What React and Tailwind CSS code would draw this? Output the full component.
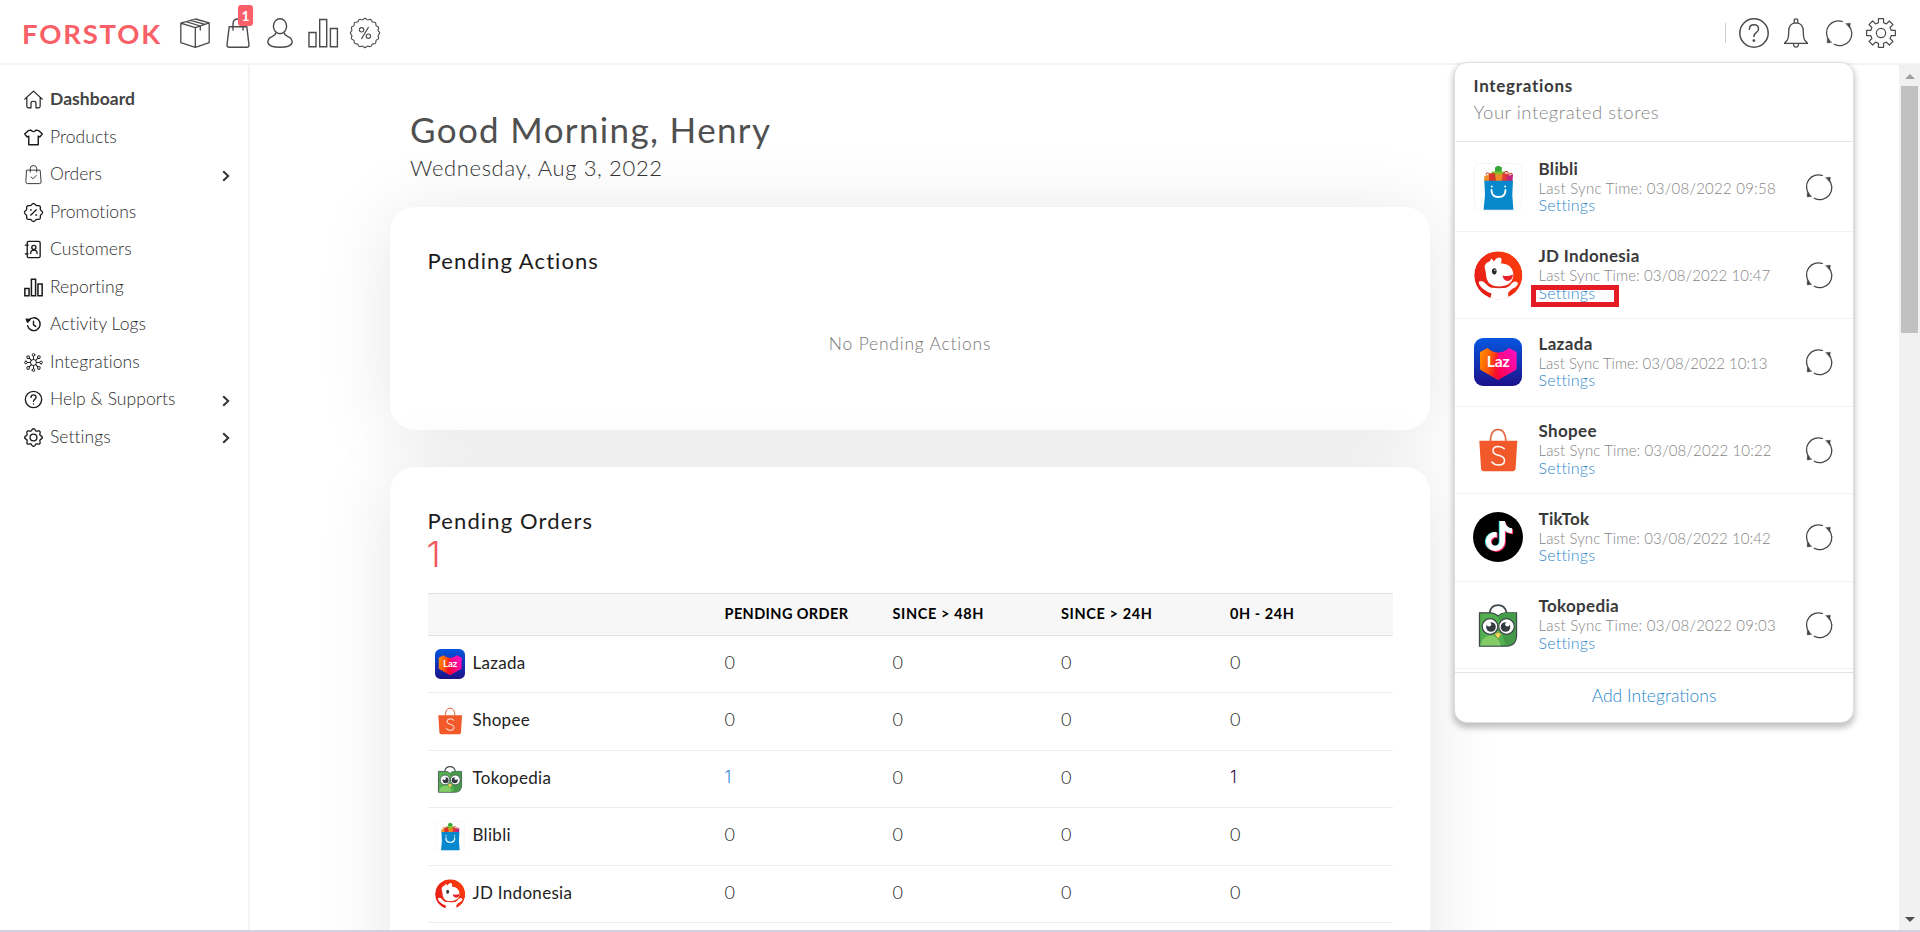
import React from "react";
import { FaTiktok } from "react-icons/fa";

/* ---------- shape helpers ---------- */

function wavePath(c, r, amp, lobes) {
  const pts = [];
  const n = 144;
  for (let i = 0; i < n; i++) {
    const a = (i / n) * Math.PI * 2 - Math.PI / 2;
    const rr = r + amp * Math.cos(lobes * (a + Math.PI / 2));
    pts.push(`${(c + rr * Math.cos(a)).toFixed(2)} ${(c + rr * Math.sin(a)).toFixed(2)}`);
  }
  return `M${pts.join("L")}Z`;
}

function gearPath(c, inner, outer, teeth, half) {
  const pts = [];
  const step = (Math.PI * 2) / teeth;
  for (let i = 0; i < teeth; i++) {
    const a = i * step - Math.PI / 2;
    const w = half / inner;
    const v = half / outer;
    [
      [inner, a - w],
      [outer, a - v],
      [outer, a + v],
      [inner, a + w],
    ].forEach(([r, t]) => pts.push(`${(c + r * Math.cos(t)).toFixed(2)} ${(c + r * Math.sin(t)).toFixed(2)}`));
  }
  return `M${pts.join("L")}Z`;
}

function Svg({ size = 19, box = 20, sw = 1.2, className = "", children }) {
  return (
    <svg
      width={size}
      height={size}
      viewBox={`0 0 ${box} ${box}`}
      fill="none"
      stroke="currentColor"
      strokeWidth={sw}
      strokeLinecap="round"
      strokeLinejoin="round"
      className={`shrink-0 overflow-visible ${className}`}
    >
      {children}
    </svg>
  );
}

/* ---------- top bar icons (30px grid) ---------- */

const BoxIcon = () => (
  <Svg size={30} box={30} sw={1.3}>
    <path d="M15.5 1 29.2 4.8V24.7L15.3 29.3 0.8 24.7V5.2ZM0.8 5.2 15.3 9.6 29.2 4.8M15.3 9.6V29.3M6 3.7 20.3 8V12M10.5 2.4 25 6.3" />
  </Svg>
);

const BagIcon = () => (
  <svg width="24" height="30" viewBox="0 0 24 30" fill="none" stroke="currentColor" strokeWidth="1.4" strokeLinejoin="round" strokeLinecap="round" className="shrink-0">
    <path d="M3.2 8.7H20.8L23 27Q23 29.2 20.8 29.2H3.2Q1 29.2 1 27Z" />
    <path d="M7 12V6.2Q7 1 12 1T17 6.2V12" />
  </svg>
);

const UserIcon = () => (
  <svg width="26" height="30" viewBox="0 0 26 30" fill="none" stroke="currentColor" strokeWidth="1.4" className="shrink-0">
    <ellipse cx="13" cy="8.2" rx="6.6" ry="7.5" />
    <path d="M8.8 14.5Q8.6 17 5 18.6Q0.8 20.3 0.8 24.5Q2 29.3 13 29.3T25.2 24.5Q25.2 20.3 21 18.6Q17.4 17 17.2 14.5" />
  </svg>
);

const BarsIcon = () => (
  <Svg size={30} box={30} sw={1.4}>
    <path d="M1 14.5H8V28.7H1ZM11.7 1.5H18.7V28.7H11.7ZM22.4 10.5H29.4V28.7H22.4Z" strokeLinejoin="miter" />
  </Svg>
);

const PercentIcon = () => (
  <Svg size={30} box={30} sw={1.1}>
    <path d={wavePath(15, 14, 0.65, 16)} />
    <circle cx="11.6" cy="11.8" r="2.2" />
    <circle cx="18.4" cy="18.2" r="2.2" />
    <path d="M18.4 9.4 11.6 20.6" />
  </Svg>
);

const HelpIcon = () => (
  <Svg size={30} box={30} sw={1.5}>
    <circle cx="15" cy="15" r="14.2" />
    <path d="M10.4 11.2Q10.4 6.7 15 6.7T19.5 11Q19.5 13.2 17.2 14.6T14.9 18.6" />
    <circle cx="14.9" cy="22.6" r="0.7" fill="currentColor" />
  </Svg>
);

const BellIcon = () => (
  <svg width="24" height="30" viewBox="0 0 24 30" fill="none" stroke="currentColor" strokeWidth="1.3" strokeLinejoin="round" className="shrink-0">
    <path d="M10.2 5V2.4Q10.2 0.8 12 0.8T13.8 2.4V5" />
    <path d="M12 4.8Q19.3 5 19.3 13.5Q19.3 20 20.8 22.2L23.6 25.4H0.4L3.2 22.2Q4.7 20 4.7 13.5Q4.7 5 12 4.8Z" />
    <path d="M9.5 25.6Q9.5 29.2 12 29.2T14.5 25.6" />
  </svg>
);

const SyncIcon = () => (
  <Svg size={26} box={26} sw={1.3}>
    <path d="M3.2 20.4A12 12 0 0 1 16.4 1.5M22.4 5.2A12 12 0 0 1 8.200 24.200" />
    <path d="M19.800 3.600 24.400 3.200 23.800 7.800ZM1.200 18.600 1.200 23 5.600 22.400Z" fill="currentColor" strokeWidth="0.400" />
  </Svg>
);

const GearIcon = () => (
  <Svg size={30} box={30} sw={1.2}>
    <path d={gearPath(15, 10.6, 14.6, 8, 2.6)} />
    <circle cx="15" cy="15" r="4.6" />
  </Svg>
);

/* ---------- sidebar icons (19px grid) ---------- */

const icons = {
  home: (
    <Svg>
      <path d="M0.8 9.6 10 1.2 19.2 9.6M3 8V17.2Q3 18.8 4.6 18.8H7.4V13.6Q7.4 11.8 10 11.8T12.6 13.6V18.8H15.4Q17 18.8 17 17.2V8" />
    </Svg>
  ),
  shirt: (
    <Svg sw={1.5}>
      <path d="M7 2.2Q10 5.4 13 2.2L15.6 2.8 19.3 6.4 16.6 9.4 15 8.6V17.6H5V8.6L3.4 9.4 0.7 6.4 4.4 2.8Z" />
    </Svg>
  ),
  bag: (
    <Svg sw={0.9}>
      <path d="M3 5.4H17L18 18Q18 19.6 16.4 19.6H3.6Q2 19.6 2 18ZM6.6 7.4V3.6Q6.6 0.6 10 0.6T13.4 3.6V7.4M7.4 12.6 9.4 14.4 13 11" />
    </Svg>
  ),
  percent: (
    <Svg sw={1.4}>
      <path d={wavePath(10, 8.7, 0.75, 8)} />
      <path d="M13 7.2 7 12.8" />
      <circle cx="7.2" cy="7.4" r="0.3" />
      <circle cx="12.9" cy="12.7" r="0.3" />
    </Svg>
  ),
  contact: (
    <Svg sw={1.4}>
      <rect x="3.4" y="1.4" width="13.6" height="17.2" rx="1.5" />
      <path d="M1.4 5.4H4.4M1.4 14.6H4.4M7 14.2Q7 10.6 10.4 10.6T13.8 14.2" />
      <circle cx="10.4" cy="7.8" r="2.2" />
    </Svg>
  ),
  bars: (
    <Svg sw={1.6}>
      <path d="M0.9 11H5.3V18.6H0.9ZM7.8 1.4H12.2V18.6H7.8ZM14.7 6.4H19.1V18.6H14.7Z" strokeLinejoin="miter" />
    </Svg>
  ),
  history: (
    <Svg sw={1.5}>
      <path d="M4.600 6.200A6.700 6.700 0 1 1 3.800 11.200M10 6.600V10.400L12.400 12" />
      <path d="M2.400 4.400 6.400 4.800 3.800 7.600Z" fill="currentColor" />
    </Svg>
  ),
  network: (
    <Svg sw={1}>
      <circle cx="10" cy="10" r="3.2" />
      {[0, 45, 90, 135, 180, 225, 270, 315].map((d) => (
        <g key={d} transform={`rotate(${d} 10 10)`}>
          <path d="M10 6.8V3.6" />
          <circle cx="10" cy="2" r="1.4" />
        </g>
      ))}
    </Svg>
  ),
  help: (
    <Svg sw={1.4}>
      <circle cx="10" cy="10" r="8.6" />
      <path d="M7.4 7.8Q7.4 5.2 10 5.2T12.7 7.6Q12.7 9 11.3 9.8T10 12M10 14.6V14.8" />
    </Svg>
  ),
  gear: (
    <Svg sw={1.4}>
      <path d={wavePath(10, 8.3, 1, 8)} />
      <circle cx="10" cy="10" r="3.6" />
    </Svg>
  ),
};

/* ---------- store logos (48px grid) ---------- */

function Lazada({ size, id }) {
  return (
    <svg width={size} height={size} viewBox="0 0 48 48" className="shrink-0">
      <defs>
        <linearGradient id={`${id}-bg`} x1="0" y1="0" x2="0" y2="1">
          <stop offset="0" stopColor="#0656e0" />
          <stop offset="1" stopColor="#1c128a" />
        </linearGradient>
        <linearGradient id={`${id}-l`} x1="0" y1="0" x2="1" y2="0.4">
          <stop offset="0" stopColor="#ff9100" />
          <stop offset="0.6" stopColor="#ff5a08" />
          <stop offset="1" stopColor="#f8102c" />
        </linearGradient>
        <linearGradient id={`${id}-r`} x1="0" y1="1" x2="1" y2="0">
          <stop offset="0" stopColor="#ff0038" />
          <stop offset="0.6" stopColor="#ff0a9c" />
          <stop offset="1" stopColor="#ff10c8" />
        </linearGradient>
      </defs>
      <rect width="48" height="48" rx="9" fill={`url(#${id}-bg)`} />
      <path d="M6 14 13.5 10Q18.500 14.500 24 14.500V42L6.800 32Q6 31.500 6 30.500Z" fill={`url(#${id}-l)`} />
      <path d="M42.600 14 35 10Q29.500 14.500 24 14.500V42L41.800 32Q42.600 31.500 42.600 30.500Z" fill={`url(#${id}-r)`} />
      <text x="24.200" y="29.200" textAnchor="middle" fill="#fff" className="font-['Lato',sans-serif] text-[15.500px] font-bold">
        Laz
      </text>
    </svg>
  );
}

function Shopee({ size }) {
  return (
    <svg width={size} height={size} viewBox="0 0 48 48" className="shrink-0">
      <path d="M16.500 15.500Q16.500 3.500 24 3.500T31.800 15.500" fill="none" stroke="#e8623c" strokeWidth="1.600" />
      <path d="M5.300 14.700H43.300L41.600 42.500Q41.300 45.300 38.500 45.300H10Q7.200 45.300 7 42.500Z" fill="#f1592a" />
      <path
        d="M30.300 22.800Q28 20.500 24.400 20.500Q19 20.500 19 24.700Q19 28 24.500 29.300Q30.500 30.700 30.500 34.500Q30.500 39 24.500 39Q20.500 39 17.800 36"
        fill="none"
        stroke="#fff"
        strokeWidth="1.500"
        strokeLinecap="round"
      />
    </svg>
  );
}

function Tokopedia({ size }) {
  return (
    <svg width={size} height={size} viewBox="0 0 48 48" className="shrink-0">
      <path d="M15.500 12Q17 4.200 24 4.200T32.700 12" fill="none" stroke="#3e474c" strokeWidth="1.700" />
      <path d="M5.500 11.800H17Q21 12 24 15Q27 12 31 11.800H42.500V34Q42.500 45.200 31.500 45.200H5.500Z" fill="#53b04f" stroke="#3e474c" strokeWidth="1.300" />
      <path d="M24 15Q27 12 31 11.800H42V34Q42 44.600 31.500 44.600Z" fill="#449a48" />
      <path d="M6.200 44.500Q8 35 17.500 34.500Q24 34.800 27 44.500Z" fill="#84cc66" />
      <circle cx="16" cy="25.500" r="7.800" fill="#fff" stroke="#3e474c" strokeWidth="1.200" />
      <circle cx="32.500" cy="25.500" r="7.800" fill="#fff" stroke="#3e474c" strokeWidth="1.200" />
      <circle cx="17" cy="26" r="4.800" fill="#333b40" />
      <circle cx="31.500" cy="26" r="4.800" fill="#333b40" />
      <circle cx="15" cy="23.200" r="2.300" fill="#fff" />
      <circle cx="33.500" cy="23.200" r="2.300" fill="#fff" />
      <path d="M20.800 33Q24 30 27.300 33L24 38Z" fill="#f8d75c" stroke="#8d7a3c" strokeWidth="0.500" />
    </svg>
  );
}

function Blibli({ size }) {
  return (
    <svg width={size} height={size} viewBox="0 0 48 48" className="shrink-0">
      <rect x="0.500" y="0.500" width="47" height="47" rx="5" fill="#fff" stroke="#f4f4f4" />
      <path d="M21 4.500 24 2.600 28 4.500 27.500 9H21Z" fill="#35a535" />
      <path d="M17.500 8.500H31V17.700H17.500Z" fill="#86bc2b" />
      <path d="M10.500 13 15 11.500 19 18H10Z" fill="#f0902a" />
      <path d="M15 10.500 21 10 22 18H15Z" fill="#d9362b" />
      <path d="M22 11.500H29V18H22Z" fill="#f08a24" />
      <path d="M28.500 10 35 11V18H28Z" fill="#e03a3a" />
      <path d="M33 13 39 11.500 38.500 18H33Z" fill="#c0267c" />
      <path d="M12 11.500Q13.500 8 15.500 11.500M30 10Q33 6.500 34.500 10.500M35 11.500Q37 9 38.500 12" fill="none" stroke="#cf4436" strokeWidth="1.100" />
      <path d="M10.300 17.700H39L38.300 32 39.400 46.700H9.600L11 32Z" fill="#0888cc" />
      <path d="M17.500 27Q17.500 34 24.500 34T31.500 27" fill="none" stroke="#fff" strokeWidth="1.900" strokeLinecap="round" />
      <circle cx="17.800" cy="23.500" r="1" fill="#fff" />
      <circle cx="31.200" cy="23.500" r="1" fill="#fff" />
    </svg>
  );
}

function JdIndonesia({ size, id }) {
  return (
    <svg width={size} height={size} viewBox="0 0 48 48" className="shrink-0 overflow-visible">
      <defs>
        <linearGradient id={`${id}-jd`} x1="0" y1="1" x2="1" y2="0.300">
          <stop offset="0" stopColor="#e2161b" />
          <stop offset="1" stopColor="#fb3c0c" />
        </linearGradient>
        <clipPath id={`${id}-clip`}>
          <circle cx="24.300" cy="24.300" r="24.100" />
        </clipPath>
      </defs>
      <g clipPath={`url(#${id}-clip)`}>
        <circle cx="24.300" cy="24.300" r="24.100" fill={`url(#${id}-jd)`} />
        <path d="M5 30.500Q9 29 12 33Q16 37.500 19 36.500L30 37Q35 36.500 37.500 32.500Q41 29 43.500 31.500Q45 33 41 36.500Q35.500 39 34 42.500L35 49H16L17.500 42.500Q8 39 5 33Z" fill="#fff" />
        <path d="M10.500 15.500Q11.500 11.500 15.500 10.500L17.500 7.500 20 10.500Q21.500 7 25 6.500Q28 6.500 27.500 9.500L27 12.500Q32 12 35.500 15Q39.500 18.500 39.300 24.500Q38.500 34.500 26 35.500Q14.500 36 12.500 27Q12 21 10.500 15.500Z" fill="#fff" />
        <ellipse cx="20.300" cy="20.300" rx="2.300" ry="3.100" fill="#2c2424" />
        <circle cx="20.900" cy="19.300" r="0.700" fill="#fff" />
        <path d="M28.500 24.500Q34 26 39 23.500Q38.500 30 33.500 30Q29.500 29.500 28.500 24.500Z" fill="#e8202a" />
        <path d="M18 35Q25 37 33 34.500L33.500 36Q25 38.300 18.500 36.500Z" fill="#d82a22" />
      </g>
    </svg>
  );
}

function TikTok({ size }) {
  return (
    <span className="relative -mx-px flex size-[50px] shrink-0 items-center justify-center rounded-full bg-black">
      <FaTiktok size={size} className="absolute top-[8.500px] left-[9.500px] text-[#35e4e0]" />
      <FaTiktok size={size} className="absolute top-[10px] left-[11.500px] text-[#f9275a]" />
      <FaTiktok size={size} className="absolute top-[9.200px] left-[10.500px] text-white" />
    </span>
  );
}

/* ---------- data ---------- */

const menu = [
  { icon: "home", label: "Dashboard", active: true },
  { icon: "shirt", label: "Products" },
  { icon: "bag", label: "Orders", more: true },
  { icon: "percent", label: "Promotions" },
  { icon: "contact", label: "Customers" },
  { icon: "bars", label: "Reporting" },
  { icon: "history", label: "Activity Logs" },
  { icon: "network", label: "Integrations" },
  { icon: "help", label: "Help & Supports", more: true },
  { icon: "gear", label: "Settings", more: true },
];

const orders = [
  { name: "Lazada", logo: <Lazada size={30} id="row-laz" />, values: ["0", "0", "0", "0"] },
  { name: "Shopee", logo: <Shopee size={30} />, values: ["0", "0", "0", "0"] },
  { name: "Tokopedia", logo: <Tokopedia size={30} />, values: ["1", "0", "0", "1"] },
  { name: "Blibli", logo: <Blibli size={30} />, values: ["0", "0", "0", "0"] },
  { name: "JD Indonesia", logo: <JdIndonesia size={30} id="row" />, values: ["0", "0", "0", "0"] },
];

const stores = [
  { name: "Blibli", time: "03/08/2022 09:58", fit: "tracking-[0.260px]", logo: <Blibli size={48} /> },
  { name: "JD Indonesia", time: "03/08/2022 10:47", fit: "tracking-[0.080px]", logo: <JdIndonesia size={48} id="pop" />, marked: true },
  { name: "Lazada", time: "03/08/2022 10:13", fit: "tracking-[-0.010px]", logo: <Lazada size={48} id="pop-laz" /> },
  { name: "Shopee", time: "03/08/2022 10:22", fit: "tracking-[0.120px]", logo: <Shopee size={48} /> },
  { name: "TikTok", time: "03/08/2022 10:42", fit: "tracking-[0.100px]", logo: <TikTok size={30} /> },
  { name: "Tokopedia", time: "03/08/2022 09:03", fit: "tracking-[0.260px]", logo: <Tokopedia size={48} /> },
];

/* ---------- sections ---------- */

function Header() {
  return (
    <header className="flex h-[65px] shrink-0 items-start justify-between border-b-2 border-[#f3f3f3] pr-6 pl-[22px] text-[#4a4a4a]">
      <div className="flex items-start pt-[18px]">
        <span className="w-[158px] text-[27.500px] leading-[32px] font-bold tracking-[1.800px] text-[#f95f66]">FORSTOK</span>
        <BoxIcon />
        <span className="relative ml-4">
          <BagIcon />
          <span className="absolute -top-[13px] left-[12px] flex h-[21px] w-[15px] items-center justify-center rounded-[3px] bg-[#fb6068] text-[14px] font-bold text-white">
            1
          </span>
        </span>
        <span className="ml-[17px]">
          <UserIcon />
        </span>
        <span className="ml-[15px]">
          <BarsIcon />
        </span>
        <span className="ml-[12px]">
          <PercentIcon />
        </span>
      </div>
      <div className="flex items-center pt-[18px]">
        <span className="h-5 w-px bg-[#cfcfcf]" />
        <span className="ml-[13px]">
          <HelpIcon />
        </span>
        <span className="ml-[15px]">
          <BellIcon />
        </span>
        <span className="ml-[18px]">
          <SyncIcon />
        </span>
        <span className="ml-[14px]">
          <GearIcon />
        </span>
      </div>
    </header>
  );
}

function Sidebar() {
  return (
    <nav className="w-[250px] shrink-0 border-r-2 border-[#f5f5f5] pt-[15.500px] pr-[18px] pl-6">
      {menu.map((m) => (
        <a key={m.label} className="flex h-[37.500px] items-center text-[17.500px] text-[#2e2e2e]">
          <span className="mt-px text-[#1a1a1a]">{icons[m.icon]}</span>
          <span className={m.active ? "ml-[7px] font-bold tracking-[0.050px] text-[#444]" : "ml-[7px] font-light tracking-[0.050px]"}>{m.label}</span>
          {m.more && (
            <svg width="8" height="12" viewBox="0 0 8 12" fill="none" stroke="#333" strokeWidth="2" className="mt-[3px] ml-auto">
              <path d="M1.200 1.200 6.200 6 1.200 10.800" />
            </svg>
          )}
        </a>
      ))}
    </nav>
  );
}

const cols = "grid grid-cols-[297px_168px_168.500px_169px_1fr]";

function OrderValue({ value, first }) {
  if (value === "0") return <span className="pb-[3px] text-[18px] font-light">0</span>;
  return (
    <span className={first ? "pb-[3px] font-['Inter',sans-serif] text-[17px] font-light text-[#3c8fe0]" : "pb-[3px] font-['Inter',sans-serif] text-[17px] font-light text-[#3a1048]"}>
      {value}
    </span>
  );
}

function Dashboard() {
  return (
    <main className="min-w-0 flex-1 overflow-hidden pt-11 pl-[140px]">
      <h1 className="pl-[20px] text-[35px] leading-[40px] tracking-[1.350px] text-[#505050]">Good Morning, Henry</h1>
      <p className="mt-[4.500px] pl-[20px] text-[22px] leading-[28px] font-light tracking-[0.640px] text-[#333]">Wednesday, Aug 3, 2022</p>

      <section className="mt-[25.500px] h-[222.500px] w-[1040px] rounded-[25px] bg-white px-[37.500px] pt-[39.500px] shadow-[0_6px_76px_rgba(0,0,0,0.100)]">
        <h2 className="text-[22px] leading-[28px] tracking-[1.080px] text-[#1c1c1c]">Pending Actions</h2>
        <p className="mt-[57.500px] text-center text-[17.500px] leading-6 font-light tracking-[0.780px] text-[#777]">No Pending Actions</p>
      </section>

      <section className="mt-[37.500px] h-[620px] w-[1040px] rounded-[25px] bg-white px-[37.500px] pt-[39.500px] shadow-[0_6px_76px_rgba(0,0,0,0.100)]">
        <h2 className="text-[22px] leading-[28px] tracking-[1.130px] text-[#1c1c1c]">Pending Orders</h2>
        <p className="mt-[1.500px] -ml-px font-['Inter',sans-serif] text-[36px] leading-[36px] font-light text-[#f4555d]">1</p>
        <div className="mt-[21px]">
          <div className={`${cols} h-[42.500px] items-center border-y border-[#e2e2e2] bg-[#f7f7f7] text-[14.500px] font-bold text-black`}>
            <span />
            <span className="tracking-[0.400px]">PENDING ORDER</span>
            <span className="tracking-[0.620px]">SINCE &gt; 48H</span>
            <span className="tracking-[0.620px]">SINCE &gt; 24H</span>
            <span className="tracking-[0.560px]">0H - 24H</span>
          </div>
          {orders.map((o) => (
            <div key={o.name} className={`${cols} h-[57.500px] items-center border-b border-[#ececec] text-[17px] text-[#222]`}>
              <span className="flex items-center pl-[7px]">
                {o.logo}
                <span className="ml-2 pb-[3px] tracking-[0.300px]">{o.name}</span>
              </span>
              {o.values.map((v, i) => (
                <OrderValue key={i} value={v} first={i === 0} />
              ))}
            </div>
          ))}
        </div>
      </section>
    </main>
  );
}

function Scrollbar() {
  return (
    <div className="flex w-[21px] shrink-0 flex-col items-center bg-[#f1f1f1]">
      <svg width="10" height="5" viewBox="0 0 10 5" className="mt-[9px] shrink-0">
        <path d="M0 5 5 0 10 5Z" fill="#a0a0a0" />
      </svg>
      <div className="mt-[7px] h-[247px] w-[17px] bg-[#c1c1c1]" />
      <svg width="10" height="5" viewBox="0 0 10 5" className="mt-auto mb-[8px] shrink-0">
        <path d="M0 0 5 5 10 0Z" fill="#505050" />
      </svg>
    </div>
  );
}

function IntegrationsMenu() {
  return (
    <aside className="absolute top-[62px] left-[1454px] flex h-[661px] w-[400px] flex-col rounded-[13px] border border-[#dedede] bg-white shadow-[0_4px_6px_1px_rgba(0,0,0,0.240)]">
      <div className="h-[79px] shrink-0 border-b border-[#e6e6e6] pt-[10.500px] pl-[18.500px]">
        <h3 className="text-[17px] leading-6 font-bold tracking-[0.720px] text-[#3a3a3a]">Integrations</h3>
        <p className="mt-[1.500px] text-[18.500px] leading-[26px] font-light tracking-[0.500px] text-[#858585]">Your integrated stores</p>
      </div>
      <ul className="pt-[2px] pb-[3px]">
        {stores.map((s) => (
          <li key={s.name} className="relative flex h-[87.500px] items-center border-b border-[#f2f2f2] pr-[21px] pl-[19px]">
            {s.logo}
            <div className="ml-[16.500px] flex-1 self-start pt-[14.500px]">
              <p className="text-[17px] leading-5 font-bold tracking-[0.320px] text-[#3a3a3a]">{s.name}</p>
              <p className={`text-[15px] leading-[18px] font-light whitespace-nowrap text-[#858585] ${s.fit}`}>Last Sync Time: {s.time}</p>
              <a className="-mt-[0.500px] block text-[16px] leading-[18px] font-light tracking-[0.200px] text-[#2b87cb]">Settings</a>
            </div>
            <span className="text-[#444]">
              <SyncIcon />
            </span>
            {s.marked && <span className="absolute top-[53.500px] left-[76px] h-[22px] w-[88px] border-[5px] border-[#e51c25]" />}
          </li>
        ))}
      </ul>
      <a className="flex flex-1 items-center justify-center border-t border-[#e2e2e2] pb-[2px] text-[17.500px] font-light text-[#2b87cb]">Add Integrations</a>
    </aside>
  );
}

export default function App() {
  return (
    <div className="relative flex h-[932px] w-[1920px] flex-col overflow-hidden bg-white font-['Lato',sans-serif]">
      <Header />
      <div className="flex min-h-0 flex-1">
        <Sidebar />
        <Dashboard />
        <Scrollbar />
      </div>
      <div className="h-[2px] shrink-0 bg-[#d3d3df]" />
      <IntegrationsMenu />
    </div>
  );
}
